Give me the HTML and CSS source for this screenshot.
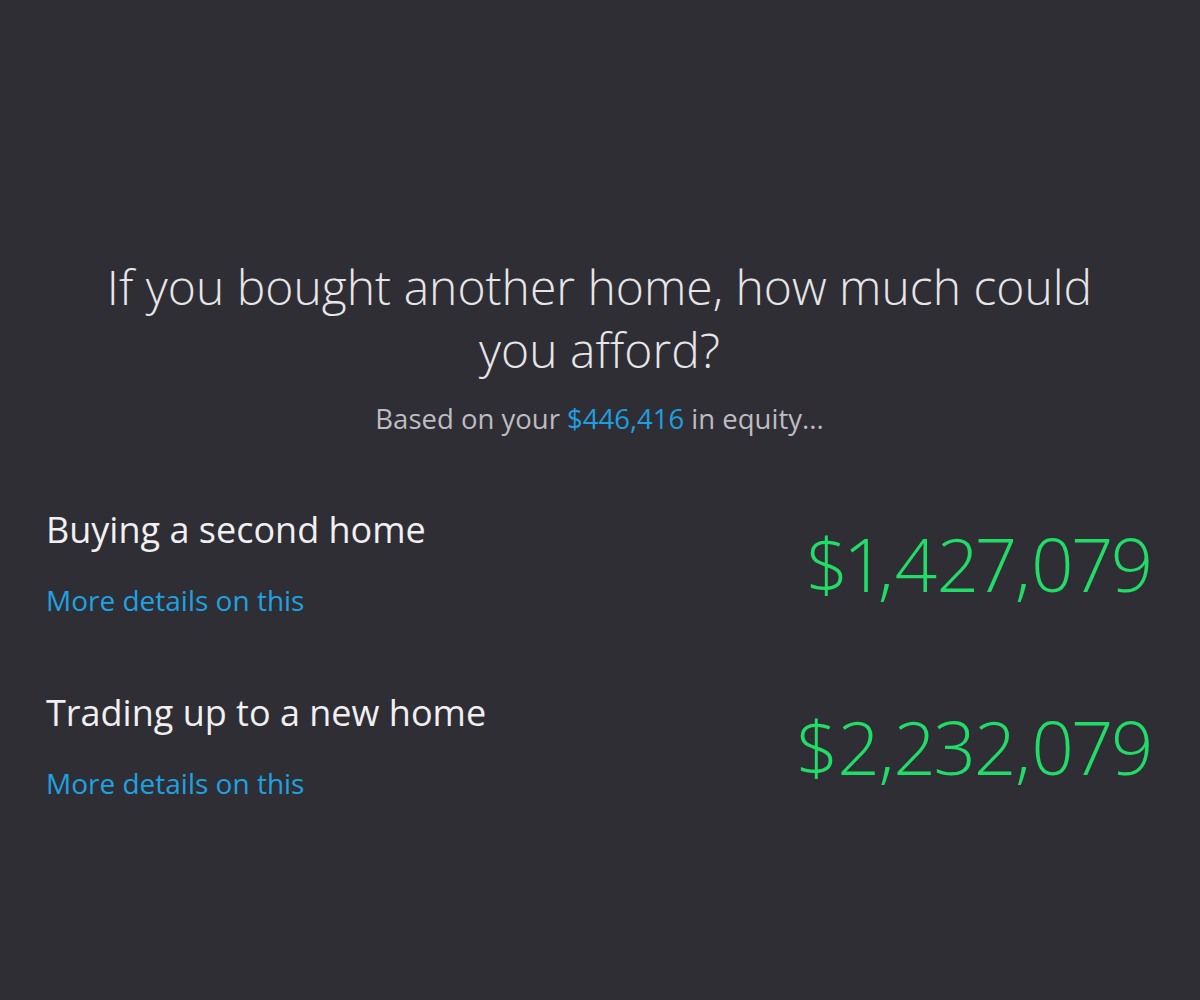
FILE: index.html
```html
<!DOCTYPE html>
<html>
<head>
<meta charset="utf-8">
<link rel="stylesheet" href="styles.css">
</head>
<body>
<main class="page">
  <h1 class="title">If you bought another home, how much could you afford?</h1>
  <p class="sub">Based on your <span class="blue">$446,416</span> in equity...</p>
  <div class="rows">
    <div class="row">
      <div class="left">
        <div class="label">Buying a second home</div>
        <a class="link">More details on this</a>
      </div>
      <div class="amount">$1,427,079</div>
    </div>
    <div class="row">
      <div class="left">
        <div class="label">Trading up to a new home</div>
        <a class="link">More details on this</a>
      </div>
      <div class="amount">$2,232,079</div>
    </div>
  </div>
</main>
</body>
</html>
```
FILE: styles.css
```css
html, body {
  margin: 0;
  padding: 0;
  background: #2f2e34;
  height: 100%;
}
body {
  font-family: "Open Sans", "Noto Sans", sans-serif;
  color: #ededee;
}
.page {
  padding: 255px 47px 0 46px;
}
.title {
  margin: 0 auto;
  width: 1040px;
  text-align: center;
  font-weight: 300;
  font-size: 48px;
  line-height: 63px;
  color: #e6e5e8;
}
.sub {
  margin: 20px 0 0;
  text-align: center;
  font-size: 27.5px;
  line-height: 36px;
  color: #bdbcc1;
}
.blue { color: #1f9fe0; }
.rows {
  margin-top: 69px;
  display: flex;
  flex-direction: column;
  gap: 70px;
}
.row {
  display: flex;
  justify-content: space-between;
  align-items: center;
}
.left {
  display: flex;
  flex-direction: column;
  gap: 27px;
}
.label {
  font-size: 36px;
  line-height: 48px;
  color: #f0eff1;
}
.link {
  font-size: 28px;
  line-height: 38px;
  color: #1fa2e2;
}
.amount {
  font-size: 74.5px;
  font-weight: 300;
  line-height: 84px;
  color: #22dc68;
  margin-top: 0;
  font-variant-numeric: proportional-nums;
}
```
